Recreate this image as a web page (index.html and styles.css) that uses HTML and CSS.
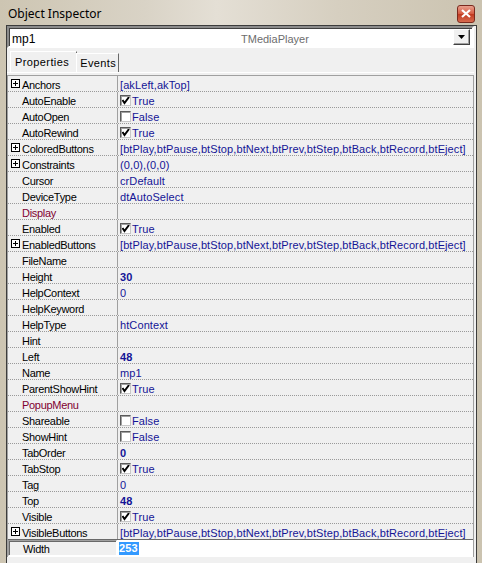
FILE: index.html
```html
<!DOCTYPE html>
<html lang="en">

<head>
    <meta charset="UTF-8">
    <title>Object Inspector</title>
    <link rel="stylesheet" href="styles.css">
</head>

<body>
    <div class="window">
        <div class="titlebar">
            <span class="title">Object Inspector</span>
            <span class="close-btn">
                <svg width="10" height="9" viewBox="0 0 10 9">
                    <path d="M1 1 L9 8 M9 1 L1 8" stroke="#fff" stroke-width="2.2" />
                </svg>
            </span>
        </div>

        <div class="client">
            <div class="combo">
                <span class="combo-name">mp1</span>
                <span class="combo-type">TMediaPlayer</span>
                <span class="combo-btn">
                    <svg width="7" height="4" viewBox="0 0 7 4"><path d="M0 0 H7 L3.5 4 Z" fill="#000" /></svg>
                </span>
            </div>

            <div class="tabs">
                <span class="tab active">Properties</span>
                <span class="tab">Events</span>
            </div>

            <div class="page">
                <div class="grid">
                    <div class="row"><div class="name"><i class="plus"></i>Anchors</div><div class="value">[akLeft,akTop]</div></div>
                    <div class="row"><div class="name">AutoEnable</div><div class="value"><i class="check on"></i>True</div></div>
                    <div class="row"><div class="name">AutoOpen</div><div class="value"><i class="check"></i>False</div></div>
                    <div class="row"><div class="name">AutoRewind</div><div class="value"><i class="check on"></i>True</div></div>
                    <div class="row"><div class="name"><i class="plus"></i>ColoredButtons</div><div class="value">[btPlay,btPause,btStop,btNext,btPrev,btStep,btBack,btRecord,btEject]</div></div>
                    <div class="row"><div class="name"><i class="plus"></i>Constraints</div><div class="value">(0,0),(0,0)</div></div>
                    <div class="row"><div class="name">Cursor</div><div class="value">crDefault</div></div>
                    <div class="row"><div class="name">DeviceType</div><div class="value">dtAutoSelect</div></div>
                    <div class="row"><div class="name ref">Display</div><div class="value"></div></div>
                    <div class="row"><div class="name">Enabled</div><div class="value"><i class="check on"></i>True</div></div>
                    <div class="row"><div class="name"><i class="plus"></i>EnabledButtons</div><div class="value">[btPlay,btPause,btStop,btNext,btPrev,btStep,btBack,btRecord,btEject]</div></div>
                    <div class="row"><div class="name">FileName</div><div class="value"></div></div>
                    <div class="row"><div class="name">Height</div><div class="value bold">30</div></div>
                    <div class="row"><div class="name">HelpContext</div><div class="value">0</div></div>
                    <div class="row"><div class="name">HelpKeyword</div><div class="value"></div></div>
                    <div class="row"><div class="name">HelpType</div><div class="value">htContext</div></div>
                    <div class="row"><div class="name">Hint</div><div class="value"></div></div>
                    <div class="row"><div class="name">Left</div><div class="value bold">48</div></div>
                    <div class="row"><div class="name">Name</div><div class="value">mp1</div></div>
                    <div class="row"><div class="name">ParentShowHint</div><div class="value"><i class="check on"></i>True</div></div>
                    <div class="row"><div class="name ref">PopupMenu</div><div class="value"></div></div>
                    <div class="row"><div class="name">Shareable</div><div class="value"><i class="check"></i>False</div></div>
                    <div class="row"><div class="name">ShowHint</div><div class="value"><i class="check"></i>False</div></div>
                    <div class="row"><div class="name">TabOrder</div><div class="value bold">0</div></div>
                    <div class="row"><div class="name">TabStop</div><div class="value"><i class="check on"></i>True</div></div>
                    <div class="row"><div class="name">Tag</div><div class="value">0</div></div>
                    <div class="row"><div class="name">Top</div><div class="value bold">48</div></div>
                    <div class="row"><div class="name">Visible</div><div class="value"><i class="check on"></i>True</div></div>
                    <div class="row"><div class="name"><i class="plus"></i>VisibleButtons</div><div class="value">[btPlay,btPause,btStop,btNext,btPrev,btStep,btBack,btRecord,btEject]</div></div>
                    <div class="row selected"><div class="name">Width</div><div class="value"><span class="sel-text">253</span></div></div>
                </div>
            </div>
        </div>
    </div>
</body>

</html>
```

FILE: styles.css
```css
/* Window frame */
body {
    margin: 0;
    background-color: #d3ccbd;
}

.window {
    width: 482px;
    height: 563px;
    overflow: hidden;
    background: linear-gradient(90deg, #cdc5b2 0%, #d9d3c6 30%, #e4dfd5 45%, #d6cfc0 70%, #cbc3b0 100%);
}

.titlebar {
    height: 25px;
    display: flex;
    align-items: center;
    padding-left: 8px;
}

.title {
    font-family: "Noto Sans", sans-serif;
    font-size: 12px;
    color: #000;
    padding-top: 2px;
}

.close-btn {
    margin-left: auto;
    margin-right: 7px;
    margin-top: 2px;
    width: 16px;
    height: 16px;
    border: 1px solid #7a2a1e;
    border-radius: 3px;
    background: linear-gradient(#e9a08d, #d4583f 50%, #c0391f 51%, #d86a4e);
    display: flex;
    align-items: center;
    justify-content: center;
}

.client {
    margin: 0 5px 0 6px;
    height: 538px;
    padding-right: 2px;
    border: 1px solid #3c3c3c;
    border-bottom: none;
    background-color: #f0f0f0;
    font-family: "Liberation Sans", Arial, sans-serif;
    font-size: 11px;
}

/* Component selector */
.combo {
    height: 18px;
    display: flex;
    align-items: center;
    background-color: #fff;
    border: 2px solid;
    border-color: #8c8c8c #ffffff #ffffff #8c8c8c;
    box-shadow: inset 1px 1px 0 #404040;
    padding: 0 2px 0 3px;
    font-size: 12px;
}

.combo-name,
.combo-type {
    padding-top: 3px;
}

.combo-name {
    width: 229px;
}

.combo-type {
    color: #6d6d6d;
    font-size: 11px;
}

.combo-btn {
    margin-left: auto;
    width: 15px;
    height: 14px;
    display: flex;
    align-items: center;
    justify-content: center;
    background-color: #f0f0f0;
    border: 1px solid;
    border-color: #fff #404040 #404040 #fff;
    box-shadow: inset -1px -1px 0 #a0a0a0;
}

/* Tabs */
.tabs {
    height: 24px;
    display: flex;
    align-items: flex-end;
    padding-left: 3px;
}

.tab {
    height: 17px;
    padding: 1px 2px 0 3px;
    border: 1px solid;
    border-color: #fff #696969 transparent #fff;
    border-bottom: none;
    line-height: 17px;
    font-size: 11px;
    letter-spacing: 0.4px;
}

.tab.active {
    height: 20px;
    line-height: 20px;
    padding: 0 7px 0 4px;
    margin-right: -1px;
}

.page {
    border-top: 1px solid #fff;
    padding: 2px 0 0 0;
}

/* Property grid */
.grid {
    border-top: 1px solid #a0a0a0;
    border-left: 1px solid #a0a0a0;
    border-right: 1px solid #a0a0a0;
}

.row {
    display: flex;
    height: 15px;
    border-bottom: 1px dotted #9a9a9a;
    line-height: 14px;
}

.name {
    width: 95px;
    padding: 2px 0 0 14px;
    border-right: 1px solid #a0a0a0;
    color: #000;
    position: relative;
    white-space: nowrap;
    letter-spacing: -0.3px;
}

.name.ref {
    color: #800030;
}

.value {
    flex: 1;
    padding: 2px 0 0 2px;
    color: #141496;
    white-space: nowrap;
    display: flex;
    align-items: flex-start;
    letter-spacing: 0.1px;
}

.value.bold {
    font-weight: bold;
}

.plus {
    position: absolute;
    left: 3px;
    top: 3px;
    width: 7px;
    height: 7px;
    border: 1px solid #000;
    background:
        linear-gradient(#000, #000) center / 5px 1px no-repeat,
        linear-gradient(#000, #000) center / 1px 5px no-repeat,
        #fff;
}

.check {
    width: 9px;
    height: 9px;
    margin-right: 1px;
    margin-top: 1px;
    border: 1px solid;
    border-color: #5a5a5a #c8c8c8 #c8c8c8 #5a5a5a;
    box-shadow: inset 1px 1px 0 #a0a0a0;
    background-color: #fff;
}

.check.on {
    background: #fff url("data:image/svg+xml,%3Csvg xmlns='http://www.w3.org/2000/svg' width='9' height='9'%3E%3Cpath d='M1.5 4 L3.5 7 L8 1' stroke='black' stroke-width='2' fill='none'/%3E%3C/svg%3E") no-repeat;
}

.row.selected {
    height: 16px;
    border-top: 1px solid #696969;
    margin-top: -1px;
    border-bottom: 1px solid #fff;
}

.row.selected .name {
    border: 1px solid;
    border-color: #a0a0a0 #fff #fff #a0a0a0;
    box-shadow: inset 1px 1px 0 #696969;
    width: 93px;
    padding-top: 1px;
}

.row.selected .value {
    background-color: #fff;
}

.sel-text {
    background-color: #3399ff;
    color: #fff;
    font-weight: bold;
    line-height: 13px;
    padding-right: 1px;
}
```
